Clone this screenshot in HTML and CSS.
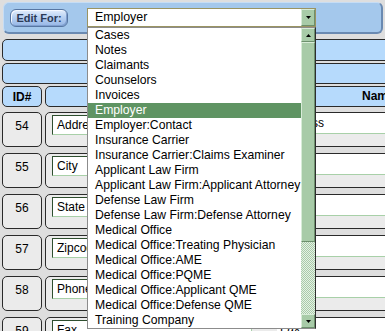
FILE: index.html
```html
<!DOCTYPE html>
<html>
<head>
<meta charset="utf-8">
<link rel="stylesheet" href="styles.css">
</head>
<body>
<div class="page">
  <div class="toolbar">
    <button class="editfor">Edit For:</button>
    <div class="combo">
      <div class="combo-value">Employer</div>
      <div class="sbtn combo-btn"><svg width="5" height="3" viewBox="0 0 5 3"><path d="M0 0h5l-2.5 3z"/></svg></div>
      <div class="combo-list">
        <div class="items">
          <div class="item">Cases</div>
          <div class="item">Notes</div>
          <div class="item">Claimants</div>
          <div class="item">Counselors</div>
          <div class="item">Invoices</div>
          <div class="item selected">Employer</div>
          <div class="item">Employer:Contact</div>
          <div class="item">Insurance Carrier</div>
          <div class="item">Insurance Carrier:Claims Examiner</div>
          <div class="item">Applicant Law Firm</div>
          <div class="item">Applicant Law Firm:Applicant Attorney</div>
          <div class="item">Defense Law Firm</div>
          <div class="item">Defense Law Firm:Defense Attorney</div>
          <div class="item">Medical Office</div>
          <div class="item">Medical Office:Treating Physician</div>
          <div class="item">Medical Office:AME</div>
          <div class="item">Medical Office:PQME</div>
          <div class="item">Medical Office:Applicant QME</div>
          <div class="item">Medical Office:Defense QME</div>
          <div class="item">Training Company</div>
        </div>
        <div class="scrollbar">
          <div class="sbtn"><svg width="5" height="3" viewBox="0 0 5 3"><path d="M0 3h5l-2.5-3z"/></svg></div>
          <div class="thumb"></div>
          <div class="track"></div>
          <div class="sbtn"><svg width="5" height="3" viewBox="0 0 5 3"><path d="M0 0h5l-2.5 3z"/></svg></div>
        </div>
      </div>
    </div>
  </div>

  <div class="bar bar-a"></div>
  <div class="bar bar-b"></div>

  <div class="row head">
    <div class="id">ID#</div>
    <div class="field"><span class="name-h">Name</span></div>
  </div>

  <div class="row">
    <div class="id">54</div>
    <div class="field"><div class="inp label">Address</div><div class="inp value">Address</div></div>
  </div>
  <div class="row">
    <div class="id">55</div>
    <div class="field"><div class="inp label">City</div><div class="inp value">City</div></div>
  </div>
  <div class="row">
    <div class="id">56</div>
    <div class="field"><div class="inp label">State</div><div class="inp value">State</div></div>
  </div>
  <div class="row">
    <div class="id">57</div>
    <div class="field"><div class="inp label">Zipcode</div><div class="inp value">Zip</div></div>
  </div>
  <div class="row">
    <div class="id">58</div>
    <div class="field"><div class="inp label">Phone</div><div class="inp value">Phone</div></div>
  </div>
  <div class="row">
    <div class="id">59</div>
    <div class="field"><div class="inp label">Fax</div><div class="inp value">Fax</div></div>
  </div>
</div>
</body>
</html>
```

FILE: styles.css
```css
* { box-sizing: border-box; }

html, body {
  margin: 0;
  overflow: hidden;
  width: 385px;
  height: 331px;
}

body {
  background: #dedede;
  font-family: "Liberation Sans", Arial, sans-serif;
  color: #000;
}

.page {
  width: 480px;
  padding: 2px 0 0 2px;
  position: relative;
}

/* toolbar */
.toolbar {
  margin-left: 1px;
  width: 380px;
  height: 32px;
  background: #a4c8ec;
  border: 1px solid #c6ddf5;
  border-right: 2px solid #6a8ab2;
  border-bottom: 2px solid #6a8ab2;
  border-radius: 6px;
  display: flex;
  align-items: flex-start;
  padding: 5px 0 0 6px;
  gap: 19px;
  position: relative;
  z-index: 5;
}

.editfor {
  margin: 1px 0 0 0;
  width: 58px;
  height: 18px;
  padding: 0;
  border: 1px solid #5776a2;
  border-radius: 6px;
  background: linear-gradient(#e4eefc, #b8d1f2 45%, #96b6e6);
  box-shadow: inset 1px 1px 0 #f4f8ff, inset -1px -1px 0 #7f9fcf;
  font: bold 11px "Liberation Sans", Arial, sans-serif;
  color: #2b3a56;
}

.combo {
  position: relative;
  width: 229px;
  height: 19px;
  border: 1px solid #9a9462;
  background: #fff;
  display: flex;
}

.combo-value {
  flex: 1;
  font-size: 12.4px;
  line-height: 17px;
  padding-left: 7px;
}

.sbtn {
  width: 14px;
  height: 14px;
  background: #a8cba8;
  border-top: 1px solid #d8ecd8;
  border-left: 1px solid #d8ecd8;
  border-right: 1px solid #6d906d;
  border-bottom: 1px solid #6d906d;
  display: flex;
  align-items: center;
  justify-content: center;
}

.sbtn svg { display: block; fill: #000; }

.combo-btn { height: 17px; }

.combo-list {
  position: absolute;
  top: 18px;
  left: -1px;
  width: 229px;
  height: 302px;
  background: #fff;
  border: 1px solid #8c8c8c;
  border-right: 1px solid #2e2e2e;
  display: flex;
}

.items { flex: 1; }

.item {
  height: 15px;
  line-height: 15px;
  font-size: 12.2px;
  padding-left: 7px;
  white-space: nowrap;
}

.item.selected {
  background: #5f9463;
  color: #fff;
}

.scrollbar {
  width: 14px;
  display: flex;
  flex-direction: column;
}

.thumb {
  height: 200px;
  background: #a8cba8;
  border-top: 1px solid #d8ecd8;
  border-left: 1px solid #d8ecd8;
  border-right: 1px solid #6d906d;
  border-bottom: 1px solid #6d906d;
}

.track {
  flex: 1;
  background: repeating-conic-gradient(#a9caa9 0 25%, #e4f1e4 0 50%) 0 0 / 2px 2px;
}

/* bars and table */
.bar {
  background: #b6dafc;
  border: 1px solid #2a2a2a;
  border-radius: 5px;
}

.bar-a { margin-top: 5px; height: 22px; }
.bar-b { margin-top: 2px; height: 21px; }

.row {
  display: flex;
  gap: 3px;
  margin-top: 6px;
  height: 35px;
}

.row.head {
  margin-top: 2px;
  height: 21px;
}

.row.head + .row { margin-top: 5px; }

.id {
  width: 40px;
  flex: none;
  background: #ebebeb;
  border: 1px solid #2a2a2a;
  border-radius: 5px;
  text-align: center;
  font-size: 12px;
  padding-top: 6px;
}

.field {
  flex: 1;
  background: #ebebeb;
  border: 1px solid #2a2a2a;
  border-radius: 5px;
  display: flex;
  align-items: flex-start;
}

.head .id,
.head .field {
  background: #b6dafc;
  font-weight: bold;
  font-size: 12px;
}

.head .id { padding-top: 3px; }

.name-h {
  padding-left: 316px;
  line-height: 19px;
}

.inp {
  background: #fff;
  font-size: 12px;
  white-space: nowrap;
  overflow: hidden;
}

.inp.label {
  margin: 2px 0 0 6px;
  width: 200px;
  height: 20px;
  line-height: 18px;
  padding-left: 4px;
  border: 1px solid;
  border-color: #2f4f2f #a8d0a8 #a8d0a8 #2f4f2f;
}

.inp.value {
  margin-left: 25px;
  width: 200px;
  height: 21px;
  line-height: 20px;
  padding-left: 3px;
  border-bottom: 1px solid #a8d0a8;
}
```
